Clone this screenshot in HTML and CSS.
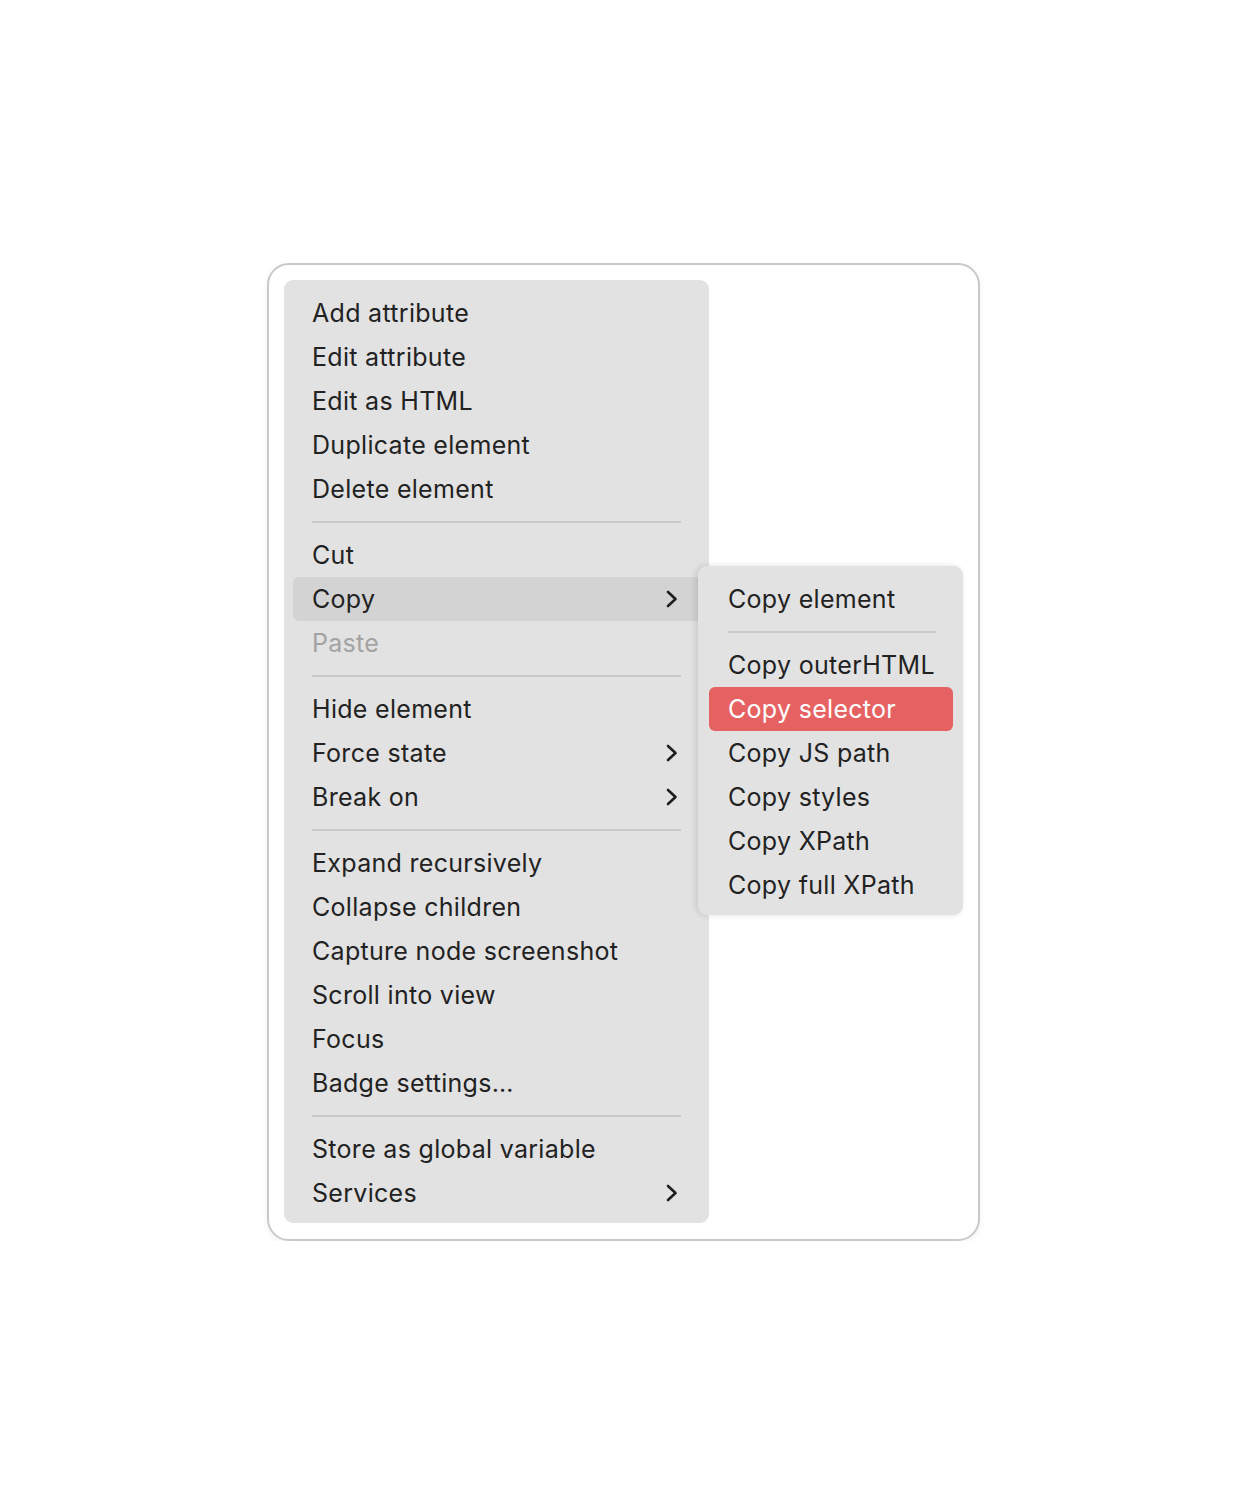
FILE: index.html
```html
<!DOCTYPE html>
<html>
<head>
<meta charset="utf-8">
<link rel="stylesheet" href="styles.css">
</head>
<body>
<div class="frame">
  <div class="menu main">
    <div class="item">Add attribute</div>
    <div class="item">Edit attribute</div>
    <div class="item">Edit as HTML</div>
    <div class="item">Duplicate element</div>
    <div class="item">Delete element</div>
    <div class="sep"></div>
    <div class="item">Cut</div>
    <div class="item hover">Copy<svg class="chev" viewBox="0 0 14 18"><path d="M3 2 L10.5 9 L3 16"/></svg></div>
    <div class="item disabled">Paste</div>
    <div class="sep"></div>
    <div class="item">Hide element</div>
    <div class="item">Force state<svg class="chev" viewBox="0 0 14 18"><path d="M3 2 L10.5 9 L3 16"/></svg></div>
    <div class="item">Break on<svg class="chev" viewBox="0 0 14 18"><path d="M3 2 L10.5 9 L3 16"/></svg></div>
    <div class="sep"></div>
    <div class="item">Expand recursively</div>
    <div class="item">Collapse children</div>
    <div class="item">Capture node screenshot</div>
    <div class="item">Scroll into view</div>
    <div class="item">Focus</div>
    <div class="item">Badge settings…</div>
    <div class="sep"></div>
    <div class="item">Store as global variable</div>
    <div class="item">Services<svg class="chev" viewBox="0 0 14 18"><path d="M3 2 L10.5 9 L3 16"/></svg></div>
  </div>
  <div class="menu sub">
    <div class="item">Copy element</div>
    <div class="sep"></div>
    <div class="item">Copy outerHTML</div>
    <div class="item active">Copy selector</div>
    <div class="item">Copy JS path</div>
    <div class="item">Copy styles</div>
    <div class="item">Copy XPath</div>
    <div class="item">Copy full XPath</div>
  </div>
</div>
</body>
</html>
```
FILE: styles.css
```css
html, body {
  margin: 0;
  padding: 0;
  background: #ffffff;
}
body {
  font-family: Inter, "Noto Sans", "Liberation Sans", sans-serif;
  padding-top: 263px;
}
.frame {
  position: relative;
  width: 713px;
  height: 978px;
  margin: 0 auto;
  box-sizing: border-box;
  border: 2px solid #c9c9c9;
  border-radius: 22px;
  background: #fff;
  box-shadow: 0 2px 6px rgba(0,0,0,0.06);
  padding: 15px;
}
.menu {
  background: #e2e2e2;
  border-radius: 9px;
  box-sizing: border-box;
  display: flex;
  flex-direction: column;
}
.main {
  width: 425px;
  height: 943px;
  padding: 11px 9px 8px 9px;
}
.sub {
  position: absolute;
  left: 429px;
  top: 301px;
  width: 265px;
  padding: 11px 10px 8px 11px;
  box-shadow: -2px 0 6px rgba(0,0,0,0.12);
}
.item {
  height: 44px;
  display: flex;
  align-items: center;
  justify-content: space-between;
  padding: 0 21px 0 19px;
  font-size: 25px;
  color: #222222;
  border-radius: 6px;
  letter-spacing: 0.3px;
  line-height: 1;
  white-space: nowrap;
}
.sub .item {
  padding-right: 0;
}
.item.hover {
  background: #d3d3d3;
  margin-right: -2px;
  padding-right: 23px;
}
.item.disabled {
  color: #a3a3a3;
}
.item.active {
  background: #e66262;
  color: #ffffff;
}
.sep {
  height: 2px;
  background: #c9c9c9;
  margin: 10px 19px 10px 19px;
}
.sub .sep {
  margin: 10px 17px 10px 19px;
}
.chev {
  width: 14px;
  height: 18px;
  fill: none;
  stroke: #1f1f1f;
  stroke-width: 2.6;
  stroke-linecap: round;
  stroke-linejoin: round;
}
```
